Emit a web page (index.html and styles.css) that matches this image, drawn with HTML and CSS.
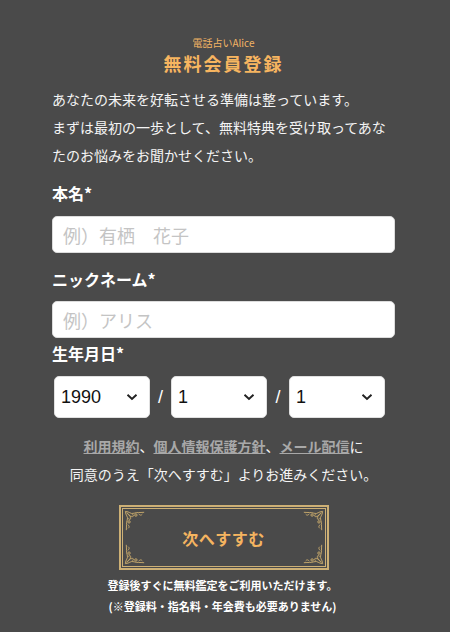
FILE: index.html
```html
<!DOCTYPE html>
<html lang="ja">
<head>
<meta charset="utf-8">
<title>無料会員登録</title>
<link rel="stylesheet" href="styles.css">
</head>
<body>
<main class="page">
  <header class="head">
    <p class="brand">電話占いAlice</p>
    <h1 class="title">無料会員登録</h1>
  </header>
  <p class="intro">あなたの未来を好転させる準備は整っています。<br>まずは最初の一歩として、無料特典を受け取ってあなたのお悩みをお聞かせください。</p>

  <form class="form">
    <label class="label label-first" for="name">本名*</label>
    <input class="field" id="name" type="text" placeholder="例）有栖　花子">

    <label class="label label-nick" for="nick">ニックネーム*</label>
    <input class="field" id="nick" type="text" placeholder="例）アリス">

    <label class="label label-birth" for="year">生年月日*</label>
    <div class="birth">
      <select class="sel" id="year"><option>1990</option></select>
      <span class="slash">/</span>
      <select class="sel"><option>1</option></select>
      <span class="slash">/</span>
      <select class="sel"><option>1</option></select>
    </div>

    <p class="notice"><a href="#">利用規約</a>、<a href="#">個人情報保護方針</a>、<a href="#">メール配信</a>に<br>同意のうえ「次へすすむ」よりお進みください。</p>

    <div class="btn-wrap">
      <button class="btn" type="button">
        <svg class="orn orn-tl" viewBox="0 0 24 24"><g fill="none" stroke="#c9ab6c" stroke-width="1"><path d="M1.5 1.5 C6 1.5 7 5 11 3.5 C14 2.3 17 3 22 2.5"/><path d="M1.5 1.5 C1.5 6 5 7 3.5 11 C2.3 14 3 17 2.5 22"/><path d="M3 3 C6 5 8 8 7 10 C6 11.5 4.5 10 5.5 8.5"/><path d="M3 3 C5 6 8 8 10 7 C11.5 6 10 4.5 8.5 5.5"/><circle cx="13" cy="5.5" r="1.3"/><circle cx="5.5" cy="13" r="1.3"/><path d="M16 4 C17 6 19 6 20 4.5"/><path d="M4 16 C6 17 6 19 4.5 20"/></g></svg>
        <svg class="orn orn-tr" viewBox="0 0 24 24"><g fill="none" stroke="#c9ab6c" stroke-width="1"><path d="M1.5 1.5 C6 1.5 7 5 11 3.5 C14 2.3 17 3 22 2.5"/><path d="M1.5 1.5 C1.5 6 5 7 3.5 11 C2.3 14 3 17 2.5 22"/><path d="M3 3 C6 5 8 8 7 10 C6 11.5 4.5 10 5.5 8.5"/><path d="M3 3 C5 6 8 8 10 7 C11.5 6 10 4.5 8.5 5.5"/><circle cx="13" cy="5.5" r="1.3"/><circle cx="5.5" cy="13" r="1.3"/><path d="M16 4 C17 6 19 6 20 4.5"/><path d="M4 16 C6 17 6 19 4.5 20"/></g></svg>
        <svg class="orn orn-bl" viewBox="0 0 24 24"><g fill="none" stroke="#c9ab6c" stroke-width="1"><path d="M1.5 1.5 C6 1.5 7 5 11 3.5 C14 2.3 17 3 22 2.5"/><path d="M1.5 1.5 C1.5 6 5 7 3.5 11 C2.3 14 3 17 2.5 22"/><path d="M3 3 C6 5 8 8 7 10 C6 11.5 4.5 10 5.5 8.5"/><path d="M3 3 C5 6 8 8 10 7 C11.5 6 10 4.5 8.5 5.5"/><circle cx="13" cy="5.5" r="1.3"/><circle cx="5.5" cy="13" r="1.3"/><path d="M16 4 C17 6 19 6 20 4.5"/><path d="M4 16 C6 17 6 19 4.5 20"/></g></svg>
        <svg class="orn orn-br" viewBox="0 0 24 24"><g fill="none" stroke="#c9ab6c" stroke-width="1"><path d="M1.5 1.5 C6 1.5 7 5 11 3.5 C14 2.3 17 3 22 2.5"/><path d="M1.5 1.5 C1.5 6 5 7 3.5 11 C2.3 14 3 17 2.5 22"/><path d="M3 3 C6 5 8 8 7 10 C6 11.5 4.5 10 5.5 8.5"/><path d="M3 3 C5 6 8 8 10 7 C11.5 6 10 4.5 8.5 5.5"/><circle cx="13" cy="5.5" r="1.3"/><circle cx="5.5" cy="13" r="1.3"/><path d="M16 4 C17 6 19 6 20 4.5"/><path d="M4 16 C6 17 6 19 4.5 20"/></g></svg>
        <span class="btn-text">次へすすむ</span>
      </button>
    </div>

    <p class="foot">登録後すぐに無料鑑定をご利用いただけます。<br>(※登録料・指名料・年会費も必要ありません)</p>
  </form>
</main>
</body>
</html>
```

FILE: styles.css
```css
* { box-sizing: border-box; }

html, body {
  margin: 0;
  padding: 0;
  background: #4a4a4a;
}

body {
  font-family: "Noto Sans CJK JP", "Noto Sans", sans-serif;
  color: #f4f4f4;
  height: 632px;
  overflow: hidden;
}

.page {
  width: 343px;
  margin: 0 0 0 52px;
  padding-top: 36px;
}

.head {
  text-align: center;
}

.brand {
  margin: 0;
  font-size: 10px;
  line-height: 14px;
  color: #f3b464;
}

.title {
  margin: 0;
  font-size: 18px;
  line-height: 26px;
  font-weight: 700;
  letter-spacing: 2px;
  color: #f7b560;
}

.intro {
  margin: 9px 0 0;
  font-size: 14px;
  line-height: 28px;
  color: #f4f4f4;
}

.form {
  display: flex;
  flex-direction: column;
}

.label {
  display: block;
  font-size: 16px;
  line-height: 24px;
  font-weight: 700;
  color: #ffffff;
}

.label-first { margin-top: 12px; }
.label-nick { margin-top: 14px; }
.label-birth { margin-top: 3px; }

.field {
  margin-top: 11px;
  width: 343px;
  height: 37px;
  border: 1px solid #dcdcdc;
  border-radius: 5px;
  background: #ffffff;
  padding: 0 10px;
  font-family: "Noto Sans CJK JP", sans-serif;
  font-size: 18px;
  color: #333;
  outline: none;
}

.label-nick + .field { margin-top: 10px; }

.field::placeholder {
  color: #c4c4c4;
}

.birth {
  margin-top: 11px;
  display: flex;
  align-items: center;
  padding-left: 2px;
}

.sel {
  appearance: none;
  -webkit-appearance: none;
  width: 96px;
  height: 42px;
  border: 1px solid #e0e0e0;
  border-radius: 5px;
  background: #ffffff url("data:image/svg+xml,%3Csvg xmlns='http://www.w3.org/2000/svg' width='12' height='8' viewBox='0 0 12 8'%3E%3Cpath d='M1.5 1.8 L6 6 L10.5 1.8' fill='none' stroke='%23222' stroke-width='2'/%3E%3C/svg%3E") no-repeat right 11px center;
  padding: 0 0 0 6px;
  font-family: "Liberation Sans", Arial, sans-serif;
  font-size: 18px;
  color: #111;
}

.slash {
  width: 21px;
  text-align: center;
  font-family: "Liberation Sans", Arial, sans-serif;
  font-size: 18px;
  color: #ffffff;
}

.slash + .sel + .slash { width: 22px; }

.notice {
  margin: 14px 0 0;
  text-align: center;
  font-size: 14px;
  line-height: 28px;
  color: #f4f4f4;
}

.notice a {
  color: #a8a8a8;
  font-weight: 700;
  text-decoration: underline;
}

.btn-wrap {
  margin-top: 17px;
  display: flex;
  justify-content: center;
}

.btn {
  position: relative;
  width: 210px;
  height: 65px;
  background: #4a4a4a;
  border: 2px solid #cdb075;
  padding: 0;
  cursor: pointer;
  display: flex;
  align-items: center;
  justify-content: center;
}

.btn::before {
  content: "";
  position: absolute;
  inset: 1px;
  border: 1px solid #cdb075;
  pointer-events: none;
}

.btn-text {
  font-family: "Noto Sans CJK JP", sans-serif;
  font-size: 16px;
  font-weight: 700;
  color: #f5b460;
  letter-spacing: 0.5px;
}

.orn {
  position: absolute;
  width: 22px;
  height: 22px;
}

.orn-tl { top: 3px; left: 3px; }
.orn-tr { top: 3px; right: 3px; transform: scaleX(-1); }
.orn-bl { bottom: 3px; left: 3px; transform: scaleY(-1); }
.orn-br { bottom: 3px; right: 3px; transform: scale(-1, -1); }

.foot {
  margin: 5px 0 0 -2px;
  text-align: center;
  font-size: 11px;
  line-height: 21px;
  font-weight: 700;
  color: #ffffff;
}
```
